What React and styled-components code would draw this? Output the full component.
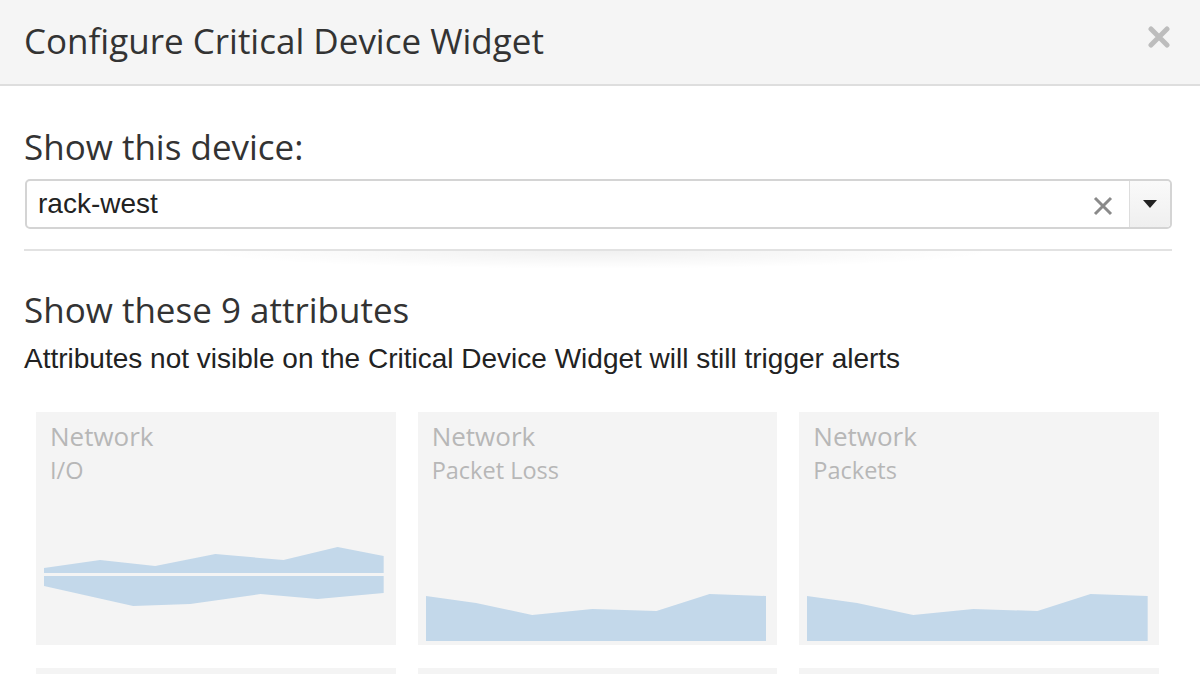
import React from 'react';
import styled, { createGlobalStyle } from 'styled-components';

const GlobalStyle = createGlobalStyle`
  html, body {
    margin: 0;
    padding: 0;
    background: #fff;
    overflow: hidden;
  }
  body {
    font-family: "Open Sans", "DejaVu Sans", sans-serif;
    color: #333;
  }
`;

const Modal = styled.div`
  width: 1200px;
  height: 674px;
  overflow: hidden;
  background: #fff;
`;

const Header = styled.div`
  height: 86px;
  box-sizing: border-box;
  background: #f5f5f5;
  border-bottom: 2px solid #dedede;
  display: flex;
  align-items: center;
  justify-content: space-between;
  padding: 0 28px 2px 24px;
`;

const Title = styled.h1`
  margin: 0;
  font-family: "Open Sans", sans-serif;
  font-weight: 400;
  font-size: 35px;
  line-height: 48px;
  color: #333;
`;

const Close = styled.button`
  border: 0;
  background: none;
  padding: 0;
  width: 26px;
  height: 26px;
  cursor: pointer;
  display: flex;
  align-items: center;
  justify-content: center;
  margin-top: -8px;
`;

const Body = styled.div`
  padding: 0 28px 0 24px;
`;

const Label = styled.div`
  font-family: "Open Sans", sans-serif;
  font-size: 35px;
  line-height: 48px;
  color: #333;
  margin-top: ${p => p.top}px;
`;

const Select = styled.div`
  margin-top: 8px;
  height: 50px;
  box-sizing: border-box;
  border: 2px solid #d4d4d4;
  border-radius: 5px;
  display: flex;
  align-items: stretch;
  background: #fff;
  margin-left: 1px;
`;

const Value = styled.div`
  flex: 1;
  display: flex;
  align-items: center;
  padding-left: 11px;
  font-family: "Liberation Sans", Arial, sans-serif;
  font-size: 28px;
  color: #222;
`;

const Clear = styled.div`
  width: 40px;
  display: flex;
  align-items: center;
  justify-content: center;
  margin-right: 6px;
  padding-top: 4px;
`;

const Arrow = styled.div`
  width: 40px;
  border-left: 1px solid #ddd;
  background: linear-gradient(#fafafa, #efefef);
  border-radius: 0 4px 4px 0;
  display: flex;
  align-items: center;
  justify-content: center;
`;

const Divider = styled.div`
  margin-top: 20px;
  height: 2px;
  background: #e2e2e2;
  position: relative;
  &::after {
    content: '';
    position: absolute;
    left: 15%;
    right: 15%;
    top: 2px;
    height: 18px;
    background: radial-gradient(ellipse at top, rgba(0,0,0,0.06), rgba(0,0,0,0) 70%);
  }
`;

const Note = styled.div`
  font-family: "Liberation Sans", Arial, sans-serif;
  font-size: 28px;
  line-height: 32px;
  color: #222;
  margin-top: 9px;
`;

const Grid = styled.div`
  margin-top: 37px;
  padding: 0 13px 0 12px;
  display: grid;
  grid-template-columns: repeat(3, 1fr);
  column-gap: 22px;
  row-gap: 23px;
`;

const Card = styled.div`
  height: 233px;
  background: #f4f4f4;
  display: flex;
  flex-direction: column;
  padding: 7px 11px 4px 8px;
  box-sizing: border-box;
`;

const CardTitle = styled.div`
  font-family: "Open Sans", sans-serif;
  font-size: ${p => p.size}px;
  line-height: 34px;
  color: #b7b7b7;
  padding-left: 6px;
`;

const Chart = styled.svg`
  margin-top: auto;
  margin-bottom: ${p => p.bottom || 0}px;
  display: block;
  width: 100%;
  height: ${p => p.h}px;
  flex-shrink: 0;
`;

const FILL = '#c3d8ea';

const IoChart = () => (
  <Chart h={60} bottom={34} viewBox="0 0 340 60" preserveAspectRatio="none">
    <polygon fill={FILL} points="0,21 56,13 111,19 171,7 239,13 293,0 339,9 339,26 0,26" />
    <polygon fill={FILL} points="0,29 339,29 339,46 273,52 216,47 146,57 89,59 0,39" />
  </Chart>
);

const AreaChart = () => (
  <Chart h={48} viewBox="0 0 340 48" preserveAspectRatio="none">
    <polygon fill={FILL} points="0,3 50,10 106,22 166,16 230,18 283,1 340,3 340,48 0,48" />
  </Chart>
);

const cards = [
  { name: 'Network', sub: 'I/O', chart: 'io' },
  { name: 'Network', sub: 'Packet Loss', chart: 'area' },
  { name: 'Network', sub: 'Packets', chart: 'area' },
  { name: 'Network', sub: 'I/O', chart: 'io' },
  { name: 'Network', sub: 'Packet Loss', chart: 'area' },
  { name: 'Network', sub: 'Packets', chart: 'area' },
];

export default function App() {
  return (
    <Modal>
      <GlobalStyle />
      <Header>
        <Title>Configure Critical Device Widget</Title>
        <Close aria-label="close">
          <svg width="22" height="22" viewBox="0 0 22 22">
            <path d="M3 3 L19 19 M19 3 L3 19" stroke="#bdbdbd" strokeWidth="5" strokeLinecap="round" />
          </svg>
        </Close>
      </Header>
      <Body>
        <Label top={37}>Show this device:</Label>
        <Select>
          <Value>rack-west</Value>
          <Clear>
            <svg width="20" height="20" viewBox="0 0 20 20">
              <path d="M2 2 L18 18 M18 2 L2 18" stroke="#8a8a8a" strokeWidth="3" />
            </svg>
          </Clear>
          <Arrow>
            <svg width="16" height="10" viewBox="0 0 16 10">
              <polygon points="1,1 15,1 8,9" fill="#222" />
            </svg>
          </Arrow>
        </Select>
        <Divider />
        <Label top={35}>Show these 9 attributes</Label>
        <Note>Attributes not visible on the Critical Device Widget will still trigger alerts</Note>
        <Grid>
          {cards.map((c, i) => (
            <Card key={i}>
              <CardTitle size={26}>{c.name}</CardTitle>
              <CardTitle size={23.5}>{c.sub}</CardTitle>
              {c.chart === 'io' ? <IoChart /> : <AreaChart />}
            </Card>
          ))}
        </Grid>
      </Body>
    </Modal>
  );
}
